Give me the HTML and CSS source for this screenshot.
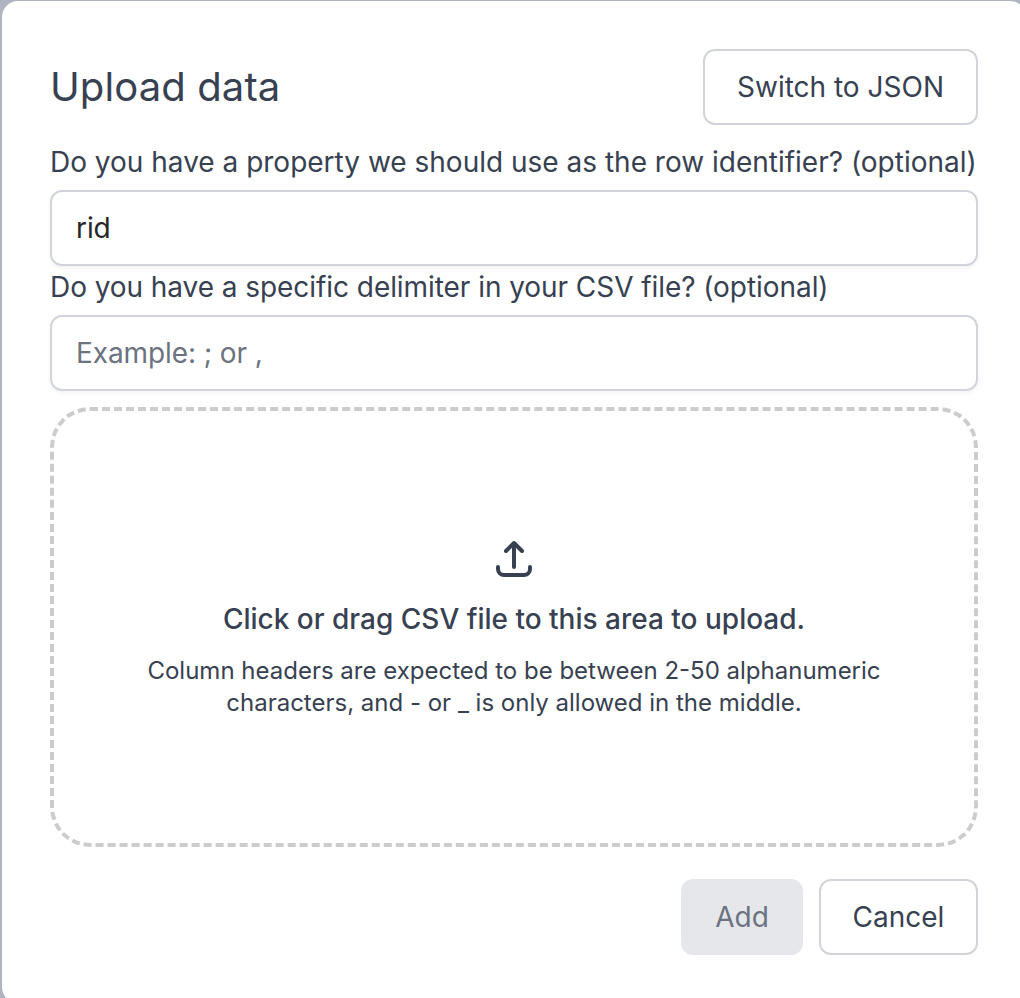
FILE: index.html
```html
<!DOCTYPE html>
<html lang="en">
<head>
<meta charset="utf-8">
<title>Upload data</title>
<link rel="stylesheet" href="styles.css">
</head>
<body>
<main class="modal">
  <header class="header">
    <h1 class="title">Upload data</h1>
    <button class="btn switch">Switch to JSON</button>
  </header>
  <label class="label" for="rid">Do you have a property we should use as the row identifier? (optional)</label>
  <input class="input" id="rid" type="text" value="rid">
  <label class="label second" for="delim">Do you have a specific delimiter in your CSV file? (optional)</label>
  <input class="input" id="delim" type="text" placeholder="Example: ; or ,">
  <section class="drop">
    <svg class="icon" width="48" height="48" viewBox="0 0 24 24"><path d="M4 16v1a3 3 0 0 0 3 3h10a3 3 0 0 0 3-3v-1m-4-8-4-4m0 0L8 8m4-4v12"/></svg>
    <p class="lead">Click or drag CSV file to this area to upload.</p>
    <p class="hint">Column headers are expected to be between 2-50 alphanumeric<br>characters, and - or _ is only allowed in the middle.</p>
  </section>
  <footer class="footer">
    <button class="btn add" disabled>Add</button>
    <button class="btn cancel">Cancel</button>
  </footer>
</main>
</body>
</html>
```
FILE: styles.css
```css
* { box-sizing: border-box; }
body {
  margin: 0;
  height: 998px;
  overflow: hidden;
  background: #afb4c1;
  padding: 1px 0 0 2px;
  font-family: Inter, sans-serif;
  color: #374151;
}
.modal {
  width: 1024px;
  height: 1002px;
  background: #fff;
  border-radius: 16px;
  padding: 48px 48px 0;
}
.header {
  display: flex;
  align-items: center;
  justify-content: space-between;
  height: 76px;
  width: 928px;
}
.title { margin: 0; font-size: 40px; line-height: 48px; font-weight: 380; letter-spacing: 0.1px; }
.btn {
  font: 380 28px/40px Inter, sans-serif;
  height: 76px;
  padding: 0;
  border: 2px solid #d1d5db;
  border-radius: 12px;
  background: #fff;
  color: #374151;
}
.switch { width: 275px; }
.label {
  display: block;
  margin-top: 17px;
  height: 40px;
  font-size: 28px;
  font-weight: 380;
  line-height: 40px;
  white-space: nowrap;
}
.second { margin-top: 1px; letter-spacing: -0.06px; }
.input {
  display: block;
  width: 928px;
  height: 76px;
  margin: 8px 0 0;
  padding: 0 24px;
  border: 2px solid #d1d5db;
  border-radius: 12px;
  box-shadow: 0 2px 4px rgba(0, 0, 0, 0.05);
  font: 380 28px/40px Inter, sans-serif;
  letter-spacing: -0.1px;
  color: #262626;
}
.input::placeholder { color: #6b7280; opacity: 1; }
.drop {
  width: 928px;
  height: 440px;
  margin-top: 16px;
  padding-top: 124px;
  border: 4px dashed #ccc;
  border-radius: 40px;
  text-align: center;
}
.icon { display: block; margin: 0 auto; fill: none; stroke: #374151; stroke-width: 2; stroke-linecap: round; stroke-linejoin: round; }
.lead { margin: 16px 0 0; font-size: 28px; line-height: 40px; font-weight: 500; }
.hint { margin: 16px 0 0; font-size: 24px; line-height: 32px; }
.footer {
  display: flex;
  justify-content: flex-end;
  gap: 16px;
  width: 928px;
  margin-top: 32px;
}
.add { width: 122px; background: #e5e7eb; border-color: #e5e7eb; color: #6b7280; }
.cancel { width: 159px; }
```
